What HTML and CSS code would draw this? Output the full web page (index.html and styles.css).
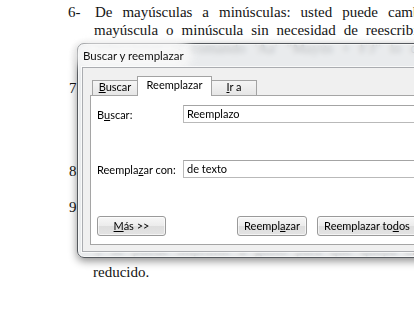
FILE: index.html
```html
<!DOCTYPE html>
<html lang="es">
<head>
<meta charset="utf-8">
<title>Buscar y reemplazar</title>
<link rel="stylesheet" href="styles.css">
</head>
<body>
<div class="doc">
  <div class="item i6">
    <span class="num">6-</span>
    <div class="body">
      <div class="line l1">De mayúsculas a minúsculas: usted puede cambiar un texto de</div>
      <div class="line l2">mayúscula o minúscula sin necesidad de reescribirlo, sólo debe</div>
      <div class="line l3">seleccionar el comando 'Aa' "Mayús + F3" lo que convertirá el texto</div>
    </div>
  </div>
  <div class="item i7">
    <span class="num">7</span>
    <div class="body"><div class="line">Buscar y reemplazar: permite encontrar una palabra dentro del texto</div></div>
  </div>
  <div class="item i8">
    <span class="num">8</span>
    <div class="body"><div class="line">Reemplazar con: escribir la palabra que sustituye a la anterior</div></div>
  </div>
  <div class="item i9">
    <span class="num">9</span>
    <div class="body">
      <div class="line">Tamaño de fuente: sirve para que el texto sea de mayor tamaño o</div>
      <div class="line">de menor tamaño, según lo que se necesite en el documento, o</div>
      <div class="line">y se puede imprimir a gusto para que quepa en un espacio</div>
      <div class="line last">reducido.</div>
    </div>
  </div>
</div>

<div class="dialog">
  <div class="titlebar"><span class="title">Buscar y reemplazar</span></div>
  <div class="frame">
    <div class="tabs">
      <div class="tab t-buscar"><u>B</u>uscar</div>
      <div class="tab t-reemplazar active">Reemplazar</div>
      <div class="tab t-ira"><u>I</u>r a</div>
    </div>
    <div class="panel">
      <div class="row row-find">
        <label class="label">B<u>u</u>scar:</label>
        <div class="input">Reemplazo</div>
      </div>
      <div class="row row-replace">
        <label class="label">Reempla<u>z</u>ar con:</label>
        <div class="input">de texto</div>
      </div>
      <div class="buttons">
        <div class="btn b-mas"><u>M</u>ás &gt;&gt;</div>
        <div class="btn b-reemplazar">Reempl<u>a</u>zar</div>
        <div class="btn b-todos">Reemplazar to<u>d</u>os</div>
      </div>
    </div>
  </div>
</div>
</body>
</html>
```

FILE: styles.css
```css
html, body {
  margin: 0;
  padding: 0;
  width: 414px;
  height: 314px;
  overflow: hidden;
  background: #ffffff;
}

body {
  position: relative;
  font-family: "Liberation Serif", "Times New Roman", serif;
  font-size: 15px;
  line-height: 18px;
  color: #141414;
}

/* document behind the dialog */
.doc {
  padding: 3px 0 0 68px;
}

.item {
  display: flex;
}

.num {
  flex: none;
  width: 27px;
}

.i7 .num, .i8 .num, .i9 .num {
  padding-left: 1px;
  width: 26px;
}

.body {
  flex: none;
}

.line {
  white-space: nowrap;
  word-spacing: 5px;
}

.l1 {
  word-spacing: 6.2px;
}

.l2 {
  margin-left: -1px;
  word-spacing: 4.2px;
}

.i7 { margin-top: 22px; }
.i8 { margin-top: 65px; }
.i9 {
  margin-top: 17px;
  line-height: 21.67px;
}

.last {
  margin-left: -2px;
}

/* dialog window */
.dialog {
  position: absolute;
  left: 77px;
  top: 43px;
  width: 350px;
  height: 215px;
  box-sizing: border-box;
  border: 1px solid #55595e;
  border-radius: 7px 0 0 7px;
  background: rgba(228, 230, 232, 0.8);
  backdrop-filter: blur(2.5px);
  -webkit-backdrop-filter: blur(2.5px);
  box-shadow: 0 3px 8px rgba(0, 0, 0, 0.45), inset 0 0 0 1px rgba(255, 255, 255, 0.6);
  padding: 0 0 5px 4px;
  display: flex;
  flex-direction: column;
  font-family: Lato, "Noto Sans", sans-serif;
  font-size: 11px;
  line-height: 13px;
  color: #000000;
}

.titlebar {
  height: 23px;
  flex: none;
  display: flex;
  align-items: center;
  padding-left: 1px;
}

.title {
  font-size: 11.5px;
  color: #111111;
  background: rgba(248, 248, 248, 0.9);
  box-shadow: 0 0 8px 8px rgba(248, 248, 248, 0.9);
  border-radius: 8px;
}

.frame {
  flex: 1;
  display: flex;
  flex-direction: column;
  border: 1px solid #aaacb0;
  border-right: none;
  background: #f0f0f0;
  padding: 8px 0 6px 7px;
  box-shadow: 0 0 0 1px rgba(255, 255, 255, 0.7);
}

.tabs {
  flex: none;
  height: 19px;
  display: flex;
  align-items: flex-end;
  padding-left: 2px;
  position: relative;
  z-index: 1;
}

.tab {
  box-sizing: border-box;
  height: 15px;
  line-height: 12px;
  text-align: center;
  border: 1px solid #a3a3a3;
  border-bottom: none;
  background: linear-gradient(#f5f5f5, #e6e6e6);
  color: #000000;
}

.t-buscar { width: 45px; border-right: none; }
.t-reemplazar { width: 75px; }
.t-ira { width: 45px; border-left: none; }

.tab.active {
  height: 20px;
  margin-bottom: -1px;
  padding-top: 2px;
  background: #ffffff;
}

.panel {
  flex: 1;
  background: #ffffff;
  border: 1px solid #a5a5a5;
  border-right: none;
  padding: 9px 0 0 6px;
  display: flex;
  flex-direction: column;
}

.row {
  display: flex;
  align-items: center;
  height: 18px;
}

.row-replace {
  margin-top: 37px;
}

.label {
  width: 86px;
  flex: none;
}

.input {
  box-sizing: border-box;
  width: 260px;
  height: 18px;
  line-height: 16px;
  border: 1px solid #b9b9b9;
  border-top-color: #a4a4a4;
  padding-left: 3px;
  background: #ffffff;
}

.buttons {
  display: flex;
  margin-top: 38px;
}

.btn {
  box-sizing: border-box;
  height: 20px;
  line-height: 18px;
  text-align: center;
  border: 1px solid #9a9a9a;
  border-radius: 3px;
  background: linear-gradient(#f7f7f7 0%, #ececec 48%, #dedede 52%, #e3e3e3 100%);
  box-shadow: inset 0 0 0 1px rgba(255, 255, 255, 0.6);
}

.b-mas { width: 69px; }
.b-reemplazar { width: 70px; margin-left: 71px; }
.b-todos { width: 100px; margin-left: 10px; }
```
